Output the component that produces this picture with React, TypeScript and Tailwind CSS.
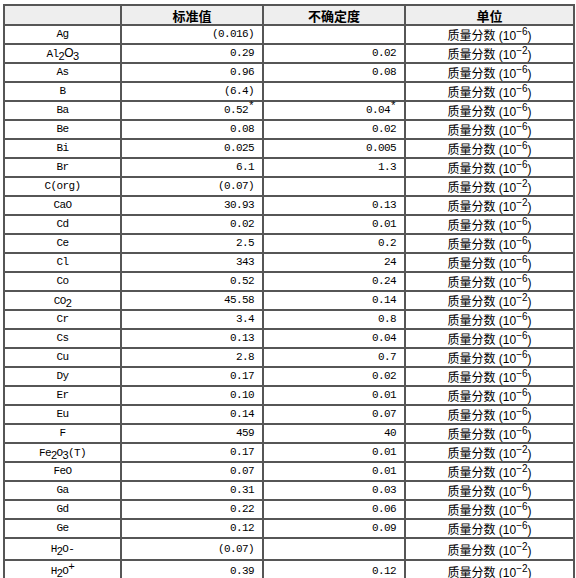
import React from "react";

type Row = {
  name: React.ReactNode;
  value: React.ReactNode;
  unc: React.ReactNode;
  exp: string;
  tall?: boolean;
};

const sub = (s: string) => (
  <sub className="relative top-[3px] bottom-auto align-baseline text-[11px] font-['Liberation_Sans',sans-serif] leading-none">{s}</sub>
);

const star = <sup className="relative top-[-4px] align-baseline text-[11px] leading-none">*</sup>;

const rows: Row[] = [
  { name: "Ag", value: "(0.016)", unc: "", exp: "-6" },
  { name: <>Al{sub("2")}<span className="font-['Liberation_Sans',sans-serif] text-[12px]">O</span>{sub("3")}</>, value: "0.29", unc: "0.02", exp: "-2" },
  { name: "As", value: "0.96", unc: "0.08", exp: "-6" },
  { name: "B", value: "(6.4)", unc: "", exp: "-6" },
  { name: "Ba", value: <>0.52{star}</>, unc: <>0.04{star}</>, exp: "-6" },
  { name: "Be", value: "0.08", unc: "0.02", exp: "-6" },
  { name: "Bi", value: "0.025", unc: "0.005", exp: "-6" },
  { name: "Br", value: "6.1", unc: "1.3", exp: "-6" },
  { name: "C(org)", value: "(0.07)", unc: "", exp: "-2" },
  { name: "CaO", value: "30.93", unc: "0.13", exp: "-2" },
  { name: "Cd", value: "0.02", unc: "0.01", exp: "-6" },
  { name: "Ce", value: "2.5", unc: "0.2", exp: "-6" },
  { name: "Cl", value: "343", unc: "24", exp: "-6" },
  { name: "Co", value: "0.52", unc: "0.24", exp: "-6" },
  { name: <>CO{sub("2")}</>, value: "45.58", unc: "0.14", exp: "-2" },
  { name: "Cr", value: "3.4", unc: "0.8", exp: "-6" },
  { name: "Cs", value: "0.13", unc: "0.04", exp: "-6" },
  { name: "Cu", value: "2.8", unc: "0.7", exp: "-6" },
  { name: "Dy", value: "0.17", unc: "0.02", exp: "-6" },
  { name: "Er", value: "0.10", unc: "0.01", exp: "-6" },
  { name: "Eu", value: "0.14", unc: "0.07", exp: "-6" },
  { name: "F", value: "459", unc: "40", exp: "-6" },
  { name: <>Fe{sub("2")}O{sub("3")}(T)</>, value: "0.17", unc: "0.01", exp: "-2" },
  { name: "FeO", value: "0.07", unc: "0.01", exp: "-2" },
  { name: "Ga", value: "0.31", unc: "0.03", exp: "-6" },
  { name: "Gd", value: "0.22", unc: "0.06", exp: "-6" },
  { name: "Ge", value: "0.12", unc: "0.09", exp: "-6" },
  { name: <>H{sub("2")}O-</>, value: "(0.07)", unc: "", exp: "-2", tall: true },
  { name: <>H{sub("2")}O<sup className="relative top-[-4px] align-baseline text-[11px] leading-none">+</sup></>, value: "0.39", unc: "0.12", exp: "-2", tall: true },
];

const mono = "font-['Liberation_Mono',monospace] text-[11px] tracking-[-0.6px]";
const cell = "border-2 border-[#565656] p-0";
const head = "font-['Noto_Sans_CJK_SC',sans-serif] text-[13px] font-bold leading-none";

export default function App() {
  return (
    <div className="bg-white pl-[3px] pt-[4px] w-[576px] h-[578px] overflow-hidden">
      <table className="table-fixed border-collapse w-[570px] text-black">
        <colgroup>
          <col className="w-[117px]" />
          <col className="w-[142px]" />
          <col className="w-[142px]" />
          <col className="w-[169px]" />
        </colgroup>
        <thead>
          <tr className="bg-[#eeeeee]">
            <th className={cell}><div className="h-[18px]"></div></th>
            <th className={`${cell} ${head}`}>标准值</th>
            <th className={`${cell} ${head}`}>不确定度</th>
            <th className={`${cell} ${head}`}>单位</th>
          </tr>
        </thead>
        <tbody>
          {rows.map((r, i) => {
            const h = r.tall ? "h-[20px]" : "h-[17px]";
            return (
              <tr key={i}>
                <td className={cell}>
                  <div className={`${h} ${mono} flex items-center justify-center leading-none whitespace-nowrap`}>
                    <span>{r.name}</span>
                  </div>
                </td>
                <td className={cell}>
                  <div className={`${h} ${mono} flex items-center justify-end pr-[8px] leading-none whitespace-nowrap`}>
                    <span>{r.value}</span>
                  </div>
                </td>
                <td className={cell}>
                  <div className={`${h} ${mono} flex items-center justify-end pr-[8px] leading-none whitespace-nowrap`}>
                    <span>{r.unc}</span>
                  </div>
                </td>
                <td className={cell}>
                  <div className={`${h} flex ${r.tall ? "items-center" : "items-end pb-[1px]"} justify-center leading-none whitespace-nowrap`}>
                    <span>
                      <span className="font-['Noto_Sans_CJK_SC',sans-serif] text-[12px]">质量分数</span>
                      <span className="font-['Liberation_Sans',sans-serif] text-[12px]">
                        {" "}(10<sup className="relative top-[-5px] align-baseline text-[10px] leading-none">{r.exp.replace("-", "−")}</sup>)
                      </span>
                    </span>
                  </div>
                </td>
              </tr>
            );
          })}
        </tbody>
      </table>
    </div>
  );
}
